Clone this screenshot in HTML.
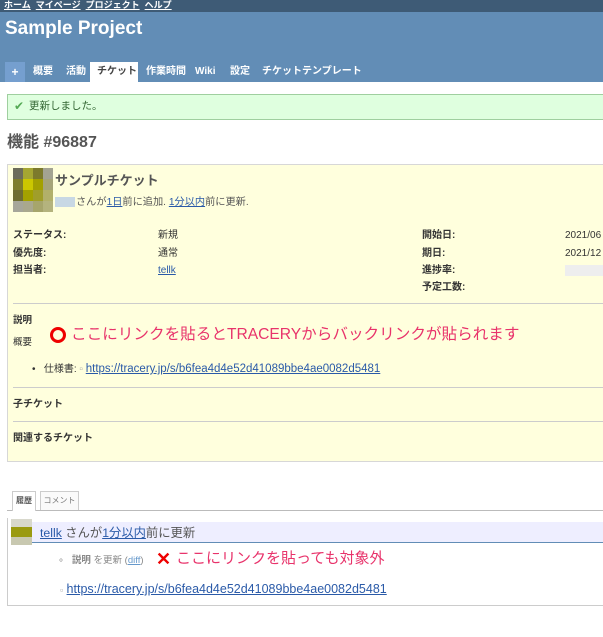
<!DOCTYPE html>
<html><head><meta charset="utf-8"><style>
*{margin:0;padding:0;box-sizing:border-box}
body{width:603px;height:637px;overflow:hidden;background:#fff;font-family:"Liberation Sans","Noto Sans CJK JP",sans-serif;color:#333;position:relative;font-size:10px}
.a{position:absolute;white-space:nowrap}
a{color:#2a5aa8;text-decoration:underline}
.b{font-weight:bold}
.px{position:absolute;width:10px;height:11px}
</style></head><body>
<div class="a" style="left:0;top:0;width:603px;height:12px;background:#3e5b76"></div>
<div class="a" style="left:4px;top:0;font-size:9px;line-height:11px;color:#fff;font-weight:bold"><u>ホーム</u>&nbsp; <u>マイページ</u>&nbsp; <u>プロジェクト</u>&nbsp; <u>ヘルプ</u></div>
<div class="a" style="left:0;top:12px;width:603px;height:70px;background:#628db6"></div>
<div class="a" style="left:5px;top:16px;font-size:19px;font-weight:bold;color:#fff;line-height:26px">Sample Project</div>
<div class="a" style="left:5px;top:62px;width:20px;height:20px;background:#759fcf;color:#fff;font-weight:bold;font-size:12px;text-align:center;line-height:20px">+</div>
<div class="a" style="left:90px;top:62px;width:48px;height:20px;background:#fff"></div>
<div class="a b" style="left:33px;top:65px;color:#fff;font-size:10px;line-height:13px">概要</div>
<div class="a b" style="left:66px;top:65px;color:#fff;font-size:10px;line-height:13px">活動</div>
<div class="a b" style="left:97px;top:65px;color:#444;font-size:10px;line-height:13px">チケット</div>
<div class="a b" style="left:146px;top:65px;color:#fff;font-size:10px;line-height:13px">作業時間</div>
<div class="a b" style="left:195px;top:65px;color:#fff;font-size:10px;line-height:13px">Wiki</div>
<div class="a b" style="left:230px;top:65px;color:#fff;font-size:10px;line-height:13px">設定</div>
<div class="a b" style="left:262px;top:65px;color:#fff;font-size:10px;line-height:13px">チケットテンプレート</div>

<div class="a" style="left:7px;top:94px;width:600px;height:26px;background:#dfffdf;border:1px solid #9fcf9f"></div>
<div class="a" style="left:14px;top:99px;color:#5a5;font-size:12px;line-height:14px">✔</div>
<div class="a" style="left:29px;top:99px;color:#336633;font-size:10.5px;line-height:14px">更新しました。</div>

<div class="a b" style="left:7px;top:133px;font-size:16px;color:#555;line-height:20px">機能 #96887</div>

<div class="a" style="left:7px;top:164px;width:600px;height:298px;background:#ffffdd;border:1px solid #d7d7d7"></div>
<div class="px" style="left:13px;top:168px;background:#6c6c5a"></div><div class="px" style="left:23px;top:168px;background:#a5a632"></div><div class="px" style="left:33px;top:168px;background:#7c7a2c"></div><div class="px" style="left:43px;top:168px;background:#a3a392"></div>
<div class="px" style="left:13px;top:179px;background:#7e7e2b"></div><div class="px" style="left:23px;top:179px;background:#cbc700"></div><div class="px" style="left:33px;top:179px;background:#a3a000"></div><div class="px" style="left:43px;top:179px;background:#a6a47a"></div>
<div class="px" style="left:13px;top:190px;background:#6e6d31"></div><div class="px" style="left:23px;top:190px;background:#a3a200"></div><div class="px" style="left:33px;top:190px;background:#a09e2a"></div><div class="px" style="left:43px;top:190px;background:#b2b06a"></div>
<div class="px" style="left:13px;top:201px;background:#a6a69a"></div><div class="px" style="left:23px;top:201px;background:#a9a88e"></div><div class="px" style="left:33px;top:201px;background:#a6a56c"></div><div class="px" style="left:43px;top:201px;background:#b4b37e"></div>
<div class="a b" style="left:55px;top:173px;font-size:13px;color:#555;line-height:16px">サンプルチケット</div>
<div class="a" style="left:55px;top:197px;width:20px;height:10px;background:#c8d8e4"></div>
<div class="a" style="left:76px;top:196px;font-size:10.2px;color:#555;line-height:13px">さんが<a>1日</a>前に追加. <a>1分以内</a>前に更新.</div>

<div class="a b" style="left:13px;top:229px;font-size:10px;line-height:13px;color:#333">ステータス:</div>
<div class="a b" style="left:13px;top:247px;font-size:10px;line-height:13px">優先度:</div>
<div class="a b" style="left:13px;top:264px;font-size:10px;line-height:13px">担当者:</div>
<div class="a" style="left:158px;top:229px;font-size:10px;line-height:13px">新規</div>
<div class="a" style="left:158px;top:247px;font-size:10px;line-height:13px">通常</div>
<div class="a" style="left:158px;top:264px;font-size:10px;line-height:13px"><a>tellk</a></div>
<div class="a b" style="left:422px;top:229px;font-size:10px;line-height:13px">開始日:</div>
<div class="a b" style="left:422px;top:247px;font-size:10px;line-height:13px">期日:</div>
<div class="a b" style="left:422px;top:264px;font-size:10px;line-height:13px">進捗率:</div>
<div class="a b" style="left:422px;top:281px;font-size:10px;line-height:13px">予定工数:</div>
<div class="a" style="left:565px;top:229px;font-size:10px;line-height:13px">2021/06</div>
<div class="a" style="left:565px;top:247px;font-size:10px;line-height:13px">2021/12</div>
<div class="a" style="left:565px;top:265px;width:38px;height:11px;background:#eee"></div>
<div class="a" style="left:13px;top:303px;width:590px;height:1px;background:#ccc"></div>
<div class="a b" style="left:13px;top:314px;font-size:9.5px;line-height:13px">説明</div>
<div class="a" style="left:13px;top:336px;font-size:9.5px;line-height:13px">概要</div>
<div class="a" style="left:50px;top:327px;width:16px;height:16px;border:3px solid #e00;border-radius:50%"></div>
<div class="a" style="left:71px;top:325px;font-size:15.6px;line-height:20px;color:#e8336b">ここにリンクを貼るとTRACERYからバックリンクが貼られます</div>
<div class="a" style="left:32px;top:362px;font-size:10px;line-height:14px">•&nbsp;&nbsp; 仕様書: <span style="color:#aaa">▫</span> <a style="font-size:11.5px">https://tracery.jp/s/b6fea4d4e52d41089bbe4ae0082d5481</a></div>
<div class="a" style="left:13px;top:387px;width:590px;height:1px;background:#ccc"></div>
<div class="a b" style="left:13px;top:398px;font-size:10px;line-height:13px">子チケット</div>
<div class="a" style="left:13px;top:421px;width:590px;height:1px;background:#ccc"></div>
<div class="a b" style="left:13px;top:432px;font-size:10px;line-height:13px">関連するチケット</div>

<div class="a" style="left:7px;top:510px;width:596px;height:1px;background:#bbb"></div>
<div class="a" style="left:12px;top:491px;width:24px;height:20px;background:#fff;border:1px solid #ccc;border-bottom:none;font-size:8px;font-weight:bold;color:#555;text-align:center;line-height:18px">履歴</div>
<div class="a" style="left:40px;top:491px;width:39px;height:19px;background:#fafafa;border:1px solid #ccc;border-bottom:none;font-size:8px;color:#777;text-align:center;line-height:18px">コメント</div>

<div class="a" style="left:7px;top:518px;width:600px;height:88px;border:1px solid #ccc;border-top:none"></div>
<div class="a" style="left:32px;top:522px;width:571px;height:21px;background:#eef;border-bottom:1px solid #628db6"></div>
<div class="a" style="left:11px;top:519px;width:21px;height:26px;background:linear-gradient(#d8d8cc,#d8d8cc 8px,#9a9a10 8px,#9a9a10 18px,#c8c8b0 18px)"></div>
<div class="a" style="left:40px;top:525px;font-size:12.3px;line-height:16px;color:#555"><a>tellk</a> さんが<a>1分以内</a>前に更新</div>
<div class="a" style="left:58px;top:554px;font-size:9.5px;line-height:13px;color:#888">∘&nbsp;&nbsp; <b>説明</b> を更新 (<a style="color:#69c">diff</a>)</div>
<div class="a" style="left:156px;top:547px;font-size:18px;line-height:24px;color:#e00;font-weight:bold">✕</div>
<div class="a" style="left:176px;top:549px;font-size:15px;line-height:20px;color:#e8336b">ここにリンクを貼っても対象外</div>
<div class="a" style="left:60px;top:582px;font-size:12px;line-height:15px"><span style="color:#aaa;font-size:9px">▫</span> <a style="font-size:12.5px">https://tracery.jp/s/b6fea4d4e52d41089bbe4ae0082d5481</a></div>
</body></html>
